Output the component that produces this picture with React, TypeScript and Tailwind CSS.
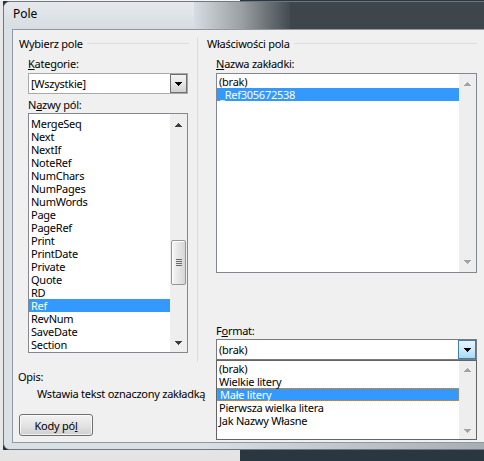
import React from "react";

const fieldNames = [
  "MergeSeq",
  "Next",
  "NextIf",
  "NoteRef",
  "NumChars",
  "NumPages",
  "NumWords",
  "Page",
  "PageRef",
  "Print",
  "PrintDate",
  "Private",
  "Quote",
  "RD",
  "Ref",
  "RevNum",
  "SaveDate",
  "Section",
];

const formats = ["(brak)", "Wielkie litery", "Małe litery", "Pierwsza wielka litera", "Jak Nazwy Własne"];

type ArrowProps = { dir: "up" | "down"; color: string };

// pixel triangle, 7x4, like the Win7 scroll glyphs
const Arrow = ({ dir, color }: ArrowProps) => {
  const rows = dir === "up" ? [1, 3, 5, 7] : [7, 5, 3, 1];
  return (
    <svg width="7" height="4" viewBox="0 0 7 4" shapeRendering="crispEdges" className="block">
      {rows.map((w, i) => (
        <rect key={i} x={(7 - w) / 2} y={i} width={w} height={1} fill={color} />
      ))}
    </svg>
  );
};

type ScrollBarProps = { enabled?: boolean; pad: string; thumb?: boolean };

const ScrollBar = ({ enabled, pad, thumb }: ScrollBarProps) => {
  const color = enabled ? "#3c3c3c" : "#a3a3a3";
  return (
    <div className={`relative flex w-[17px] shrink-0 flex-col items-center justify-between bg-[#eeeeee] ${pad}`}>
      <Arrow dir="up" color={color} />
      <Arrow dir="down" color={color} />
      {thumb && (
        <div className="absolute top-[126px] left-[1px] flex h-[45px] w-[15px] flex-col items-center justify-center gap-[1px] rounded-[2px] border border-[#959595] bg-linear-to-r from-[#f6f6f6] to-[#d6d6d6] shadow-[inset_1px_1px_0_#ffffff]">
          <div className="h-px w-[6px] bg-[#6a6a6a]" />
          <div className="h-px w-[6px] bg-[#6a6a6a]" />
          <div className="h-px w-[6px] bg-[#6a6a6a]" />
          <div className="h-px w-[6px] bg-[#6a6a6a]" />
        </div>
      )}
    </div>
  );
};

const GroupHeader = ({ title, pl, mr }: { title: string; pl: string; mr: string }) => (
  <div className={`mt-[7px] flex h-[13px] items-center ${pl} ${mr}`}>
    <span className="whitespace-nowrap">{title}</span>
    <div className="ml-[4px] h-px flex-1 bg-[#d5dfe5]" />
  </div>
);

export default function App() {
  return (
    <div className="flex h-[461px] w-[484px] flex-col overflow-hidden bg-[#28343d] font-['Noto_Sans',sans-serif] text-[11px] leading-[13px] tracking-[-0.25px] text-black">
      <div className="flex h-px shrink-0">
        <div className="w-[240px] bg-[#f4f4f4]" />
        <div className="flex-1 bg-[#2a3640]" />
      </div>
      <div className="flex h-[449px] shrink-0">
        <div className="w-[3px] shrink-0 bg-[#e8e8e8]" />
        <div className="flex w-[500px] shrink-0 flex-col overflow-hidden rounded-[7px] border border-[#6f7880] bg-[#dae1e7]">
          {/* title bar: light glass on the left, dark desktop shows through on the right */}
          <div className="flex h-[27px] shrink-0">
            <div className="w-[190px] shrink-0 bg-linear-to-b from-[#e6eaee] to-[#d6dce1] pt-[4px] pl-[9px] text-[12px] leading-[16px] tracking-normal">
              Pole
            </div>
            <div className="w-[96px] shrink-0 bg-linear-to-r from-[#d6dce1] via-[#9a9fa3] to-[#444c51]" />
            <div className="flex-1 bg-[#3e464b]" />
          </div>

          <div className="flex h-[414px] shrink-0 pl-[8px]">
            <div className="flex flex-1 flex-col border border-[#8e99a3] bg-[#f0f0f0]">
              <div className="flex h-[332px]">
                {/* Wybierz pole */}
                <div className="flex w-[184px] flex-col">
                  <GroupHeader title="Wybierz pole" pl="pl-[6px]" mr="mr-[8px]" />
                  <div className="mt-[7px] h-[13px] pl-[15px]">
                    <span className="underline">K</span>ategorie:
                  </div>
                  <div className="mt-[3px] ml-[15px] flex h-[21px] w-[160px] border border-[#a9a9a9] bg-white">
                    <div className="flex flex-1 items-center pl-[2px]">[Wszystkie]</div>
                    <div className="flex w-[17px] items-center justify-center border border-[#707070] bg-linear-to-b from-[#f4f4f4] via-[#e6e6e6] to-[#d0d0d0]">
                      <Arrow dir="down" color="#000000" />
                    </div>
                  </div>
                  <div className="mt-[4px] h-[13px] pl-[15px]">
                    N<span className="underline">a</span>zwy pól:
                  </div>
                  <div className="mt-[2px] ml-[15px] flex h-[240px] w-[160px] border border-[#828790] bg-white">
                    <div className="flex-1 overflow-hidden pt-[3px]">
                      {fieldNames.map((name) => (
                        <div
                          key={name}
                          className={`h-[13px] pl-[2px] whitespace-nowrap ${name === "Ref" ? "bg-[#3399ff] text-white" : ""}`}
                        >
                          {name}
                        </div>
                      ))}
                    </div>
                    <ScrollBar enabled thumb pad="pt-[9px] pb-[7px]" />
                  </div>
                </div>

                <div className="mt-[7px] w-px bg-[#d5dfe5]" />

                {/* Właściwości pola */}
                <div className="flex w-[286px] flex-col">
                  <GroupHeader title="Właściwości pola" pl="pl-[9px]" mr="mr-[7px]" />
                  <div className="mt-[7px] h-[13px] pl-[18px]">
                    <span className="underline">N</span>azwa zakładki:
                  </div>
                  <div className="mt-[3px] ml-[18px] flex h-[200px] w-[261px] border border-[#828790] bg-white">
                    <div className="flex-1 overflow-hidden pt-[1px]">
                      <div className="h-[13px] pl-[2px]">(brak)</div>
                      <div className="h-[13px] bg-[#3399ff] pl-[3px] text-white">_Ref305672538</div>
                    </div>
                    <ScrollBar pad="py-[8px]" />
                  </div>
                  <div className="mt-[51px] h-[13px] pl-[18px]">
                    F<span className="underline">o</span>rmat:
                  </div>
                  <div className="relative mt-[2px] ml-[18px] w-[261px]">
                    <div className="flex h-[21px] border border-[#7a7a7a] bg-white">
                      <div className="flex flex-1 items-center pl-[2px]">(brak)</div>
                      <div className="flex w-[18px] items-center justify-center border border-[#3c7fb1] bg-linear-to-b from-[#e8f5fd] via-[#cdeafc] to-[#a6d9f4]">
                        <Arrow dir="down" color="#000000" />
                      </div>
                    </div>
                    {/* open dropdown */}
                    <div className="absolute top-[21px] left-0 z-10 flex h-[80px] w-[261px] border border-[#646464] bg-white">
                      <div className="flex-1 overflow-hidden pt-[1px]">
                        {formats.map((f) => (
                          <div
                            key={f}
                            className={`h-[13px] pl-[2px] whitespace-nowrap ${
                              f === "Małe litery"
                                ? "border border-dotted border-[#d08a3e] bg-[#3399ff] pl-[1px] leading-[11px] text-white"
                                : ""
                            }`}
                          >
                            {f}
                          </div>
                        ))}
                      </div>
                      <ScrollBar pad="pt-[7px] pb-[6px]" />
                    </div>
                  </div>
                </div>
              </div>

              {/* Opis */}
              <div className="mt-[8px] h-[13px] pl-[5px]">Opis:</div>
              <div className="mt-[4px] h-[13px] pl-[24px] whitespace-nowrap">Wstawia tekst oznaczony zakładką</div>
              <button className="mt-[14px] ml-[6px] flex h-[22px] w-[74px] items-center justify-center rounded-[3px] border border-[#707070] bg-linear-to-b from-[#f2f2f2] via-[#e4e4e4] to-[#cfcfcf] shadow-[inset_0_0_0_1px_rgba(255,255,255,0.7)]">
                Kody pó<span className="underline">l</span>
              </button>
            </div>
          </div>

          <div className="flex flex-1">
            <div className="w-[200px] bg-[#d8dfe5]" />
            <div className="flex-1 bg-linear-to-r from-[#d8dfe5] to-[#a4aaae]" />
          </div>
        </div>
      </div>
      <div className="flex flex-1">
        <div className="w-[240px] bg-[#e4e4e4]" />
        <div className="flex-1 bg-[#2a3640]" />
      </div>
    </div>
  );
}
